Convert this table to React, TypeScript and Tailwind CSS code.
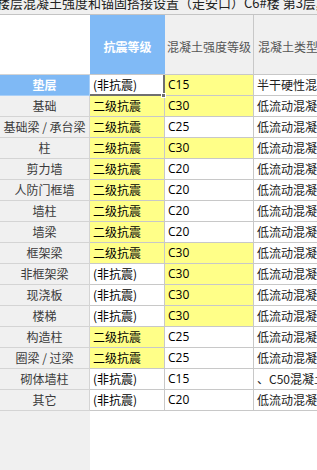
import React from "react";

type Row = { label: string; k: string; c: string; kY: boolean; cY: boolean; t: string };

const rows: Row[] = [
  { label: "垫层", k: "(非抗震)", c: "C15", kY: false, cY: true, t: "半干硬性混凝土" },
  { label: "基础", k: "二级抗震", c: "C30", kY: true, cY: true, t: "低流动混凝土" },
  { label: "基础梁 / 承台梁", k: "二级抗震", c: "C25", kY: true, cY: false, t: "低流动混凝土" },
  { label: "柱", k: "二级抗震", c: "C30", kY: true, cY: true, t: "低流动混凝土" },
  { label: "剪力墙", k: "二级抗震", c: "C20", kY: true, cY: false, t: "低流动混凝土" },
  { label: "人防门框墙", k: "二级抗震", c: "C20", kY: true, cY: false, t: "低流动混凝土" },
  { label: "墙柱", k: "二级抗震", c: "C20", kY: true, cY: false, t: "低流动混凝土" },
  { label: "墙梁", k: "二级抗震", c: "C20", kY: true, cY: false, t: "低流动混凝土" },
  { label: "框架梁", k: "二级抗震", c: "C30", kY: true, cY: true, t: "低流动混凝土" },
  { label: "非框架梁", k: "(非抗震)", c: "C30", kY: false, cY: true, t: "低流动混凝土" },
  { label: "现浇板", k: "(非抗震)", c: "C30", kY: false, cY: true, t: "低流动混凝土" },
  { label: "楼梯", k: "(非抗震)", c: "C30", kY: false, cY: true, t: "低流动混凝土" },
  { label: "构造柱", k: "二级抗震", c: "C25", kY: true, cY: false, t: "低流动混凝土" },
  { label: "圈梁 / 过梁", k: "二级抗震", c: "C25", kY: true, cY: false, t: "低流动混凝土" },
  { label: "砌体墙柱", k: "(非抗震)", c: "C15", kY: false, cY: false, t: "、C50混凝土" },
  { label: "其它", k: "(非抗震)", c: "C20", kY: false, cY: false, t: "低流动混凝土" },
];

export default function App() {
  return (
    <div
      className="w-[317px] h-[470px] overflow-hidden bg-white relative"
      style={{ fontFamily: '"Noto Sans CJK SC", "Noto Sans", sans-serif' }}
    >
      {/* title bar */}
      <div className="h-[15px] bg-[#f0f0f0] overflow-hidden border-b border-[#c4c4c4] whitespace-nowrap">
        <div className="text-[13px] leading-[15px] text-[#222] mt-[-5px] ml-[-3px]">
          楼层混凝土强度和锚固搭接设置（走安口）C6#楼 第3层, 9.55
        </div>
      </div>

      <div className="flex h-[455px]">
        {/* label column */}
        <div className="w-[90px] shrink-0 bg-[#f0f0f0] flex flex-col">
          <div className="h-[60px] bg-white border-b border-[#d4d4d4]" />
          {rows.map((r, i) => (
            <div
              key={r.label}
              className={
                "h-[21px] flex items-center justify-center whitespace-nowrap text-[12px] border-b border-r " +
                (i === 0
                  ? "bg-[#7fb9f5] text-white font-bold border-[#a9cff7]"
                  : "text-[#3a3a3a] border-[#d4d4d4]")
              }
            >
              {r.label}
            </div>
          ))}
        </div>

        {/* col 1 */}
        <div className="w-[75px] shrink-0 flex flex-col">
          <div className="h-[60px] bg-[#80baf6] flex items-center justify-center text-white font-bold text-[12px] pt-[4px] border-b border-[#c8c8c8]">
            抗震等级
          </div>
          {rows.map((r, i) => (
            <div
              key={r.label}
              className={
                "h-[21px] flex items-center pl-[3px] whitespace-nowrap text-[12px] text-black border-b border-r relative " +
                (r.kY ? "bg-[#ffff88] " : "bg-white ") +
                (i === 0 ? "border-b-2 border-r-2 border-[#6f6f6f]" : "border-[#c8c8c8]")
              }
            >
              {r.k}
              {i === 0 && (
                <div className="absolute right-[-3px] bottom-[-4px] w-[5px] h-[5px] bg-[#6f6f6f] border border-white z-10" />
              )}
            </div>
          ))}
        </div>

        {/* col 2 */}
        <div className="w-[89px] shrink-0 flex flex-col">
          <div className="h-[60px] bg-[#f0f0f0] flex items-center justify-center text-[#555] text-[12px] pt-[4px] border-b border-r border-[#c8c8c8]">
            混凝土强度等级
          </div>
          {rows.map((r) => (
            <div
              key={r.label}
              className={
                "h-[21px] flex items-center pl-[3px] whitespace-nowrap text-[12px] text-black border-b border-r border-[#c8c8c8] " +
                (r.cY ? "bg-[#ffff88]" : "bg-white")
              }
              style={{ fontFamily: '"Open Sans", "Noto Sans", sans-serif' }}
            >
              {r.c}
            </div>
          ))}
        </div>

        {/* col 3 */}
        <div className="w-[120px] shrink-0 flex flex-col">
          <div className="h-[60px] bg-[#f0f0f0] flex items-center pl-[4px] text-[#555] text-[12px] pt-[4px] border-b border-[#c8c8c8] whitespace-nowrap">
            混凝土类型
          </div>
          {rows.map((r) => (
            <div
              key={r.label}
              className="h-[21px] flex items-center pl-[3px] whitespace-nowrap overflow-hidden text-[12px] text-[#222] bg-white border-b border-[#c8c8c8]"
            >
              {r.t}
            </div>
          ))}
        </div>
      </div>
    </div>
  );
}
